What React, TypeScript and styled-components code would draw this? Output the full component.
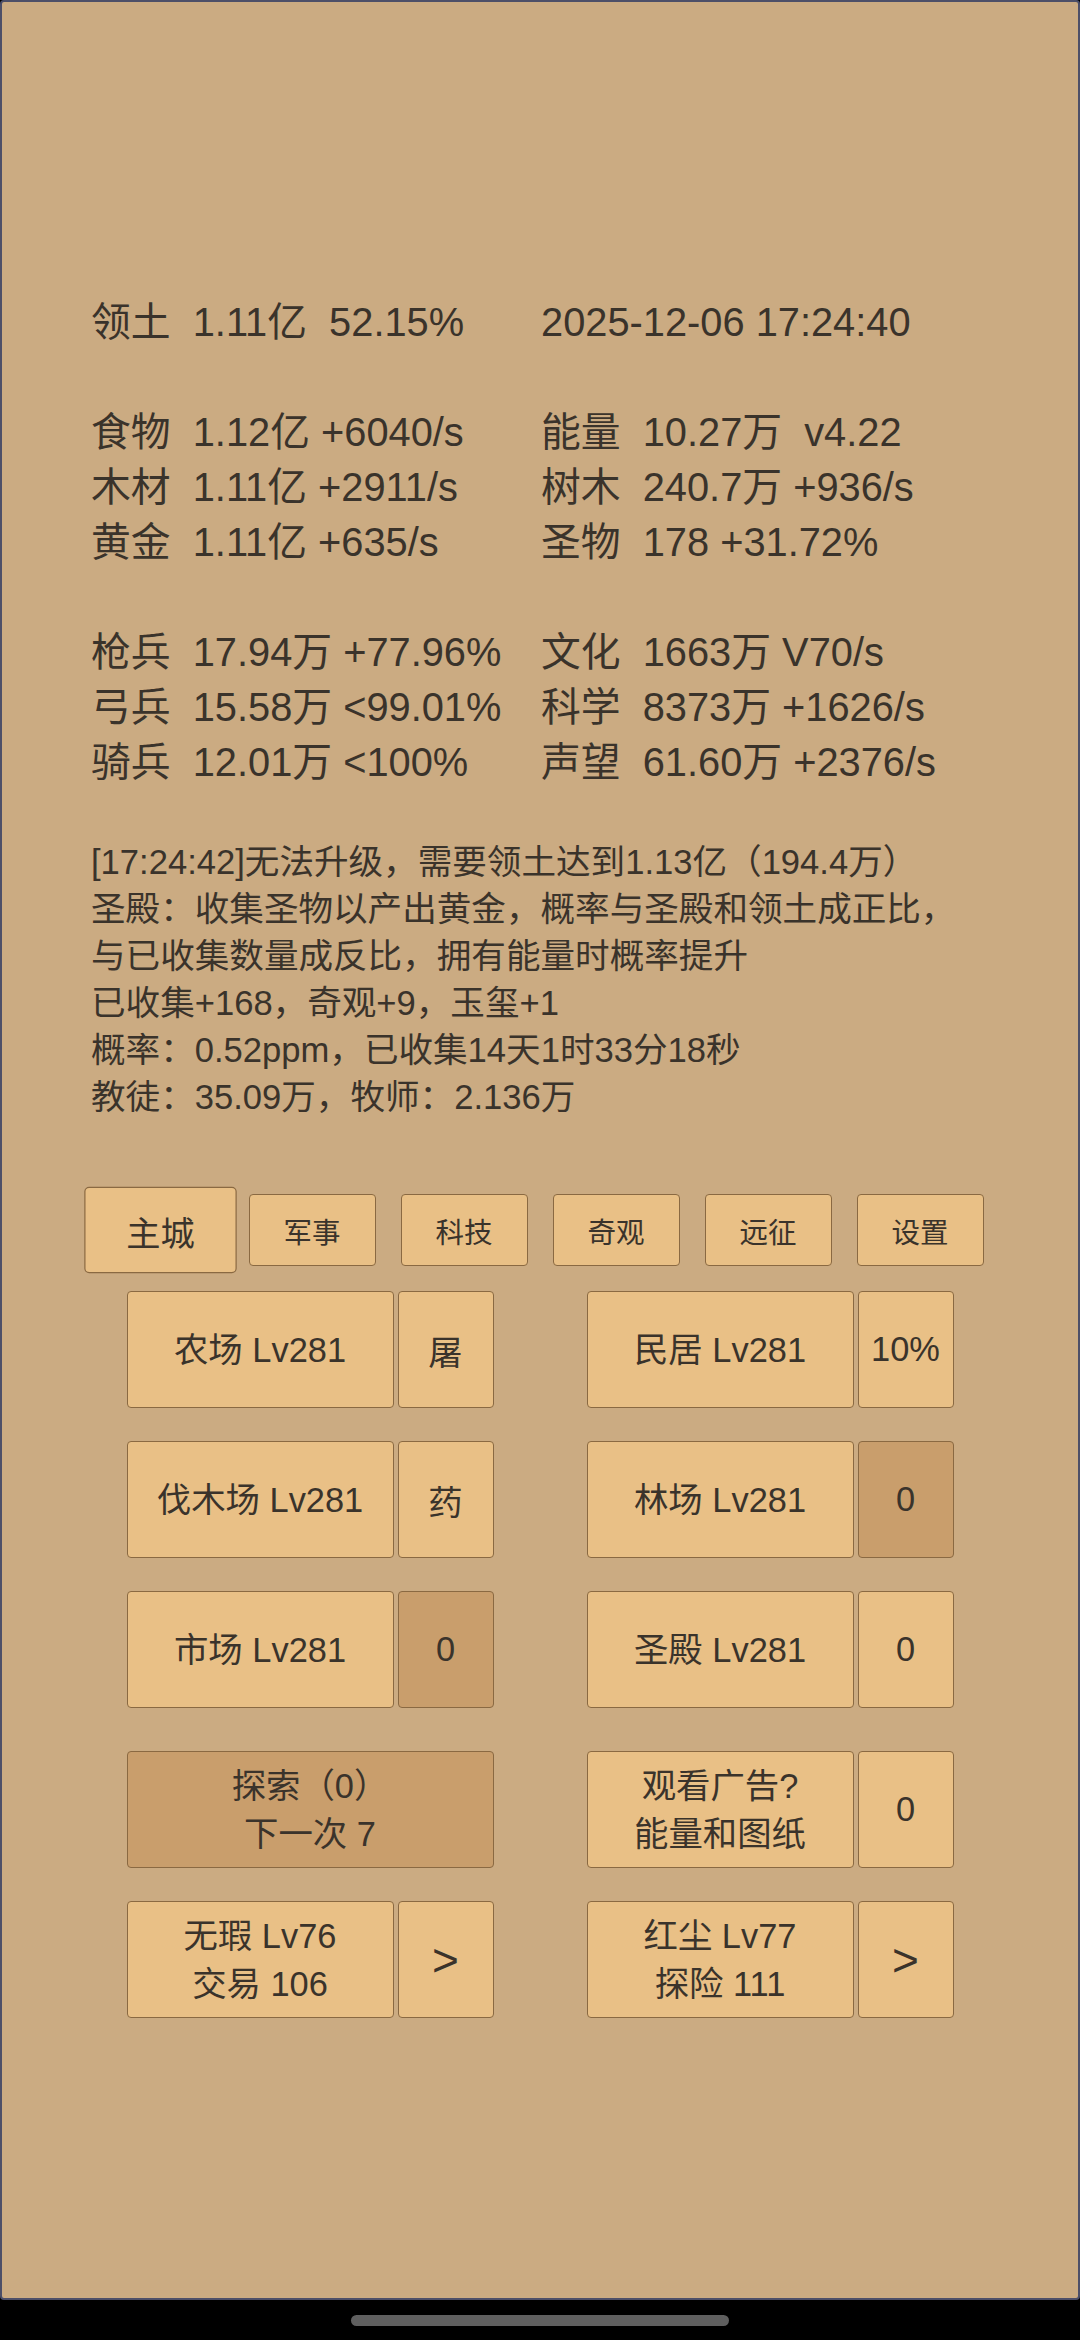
import styled, { createGlobalStyle, css } from "styled-components";

const GlobalStyle = createGlobalStyle`
  html, body {
    margin: 0;
    padding: 0;
    background: #000;
  }
  * {
    box-sizing: border-box;
  }
`;

const FONT = `"Liberation Sans", "Noto Sans CJK SC", sans-serif`;

const leftStats = [
  "领土  1.11亿  52.15%",
  "",
  "食物  1.12亿 +6040/s",
  "木材  1.11亿 +2911/s",
  "黄金  1.11亿 +635/s",
  "",
  "枪兵  17.94万 +77.96%",
  "弓兵  15.58万 <99.01%",
  "骑兵  12.01万 <100%",
];

const rightStats = [
  "2025-12-06 17:24:40",
  "",
  "能量  10.27万  v4.22",
  "树木  240.7万 +936/s",
  "圣物  178 +31.72%",
  "",
  "文化  1663万 V70/s",
  "科学  8373万 +1626/s",
  "声望  61.60万 +2376/s",
];

const logLines = [
  "[17:24:42]无法升级，需要领土达到1.13亿（194.4万）",
  "圣殿：收集圣物以产出黄金，概率与圣殿和领土成正比，",
  "与已收集数量成反比，拥有能量时概率提升",
  "已收集+168，奇观+9，玉玺+1",
  "概率：0.52ppm，已收集14天1时33分18秒",
  "教徒：35.09万，牧师：2.136万",
];

const tabs = ["主城", "军事", "科技", "奇观", "远征", "设置"];

type Tone = "light" | "dark";
interface Pair {
  main: string;
  side: string;
  sideTone?: Tone;
}

const buildings: Pair[] = [
  { main: "农场 Lv281", side: "屠" },
  { main: "民居 Lv281", side: "10%" },
  { main: "伐木场 Lv281", side: "药" },
  { main: "林场 Lv281", side: "0", sideTone: "dark" },
  { main: "市场 Lv281", side: "0", sideTone: "dark" },
  { main: "圣殿 Lv281", side: "0" },
];

const App = () => {
  return (
    <>
      <GlobalStyle />
      <Screen>
        <Frame>
          <StatsGrid>
            <StatColumn>
              {leftStats.map((line, i) => (
                <StatLine key={i}>{line}</StatLine>
              ))}
            </StatColumn>
            <StatColumn>
              {rightStats.map((line, i) => (
                <StatLine key={i}>{line}</StatLine>
              ))}
            </StatColumn>
          </StatsGrid>

          <Log>
            {logLines.map((line, i) => (
              <LogLine key={i}>{line}</LogLine>
            ))}
          </Log>

          <TabBar>
            {tabs.map((t, i) => (
              <Tab key={t} $active={i === 0}>
                {t}
              </Tab>
            ))}
          </TabBar>

          <BuildingGrid>
            {buildings.map((b) => (
              <PairRow key={b.main}>
                <Btn $tone="light">{b.main}</Btn>
                <SideBtn $tone={b.sideTone || "light"}>{b.side}</SideBtn>
              </PairRow>
            ))}
          </BuildingGrid>

          <BuildingGrid $extraTop>
            <PairRow>
              <Btn $tone="dark" $wide>
                <span>探索（0）</span>
                <span>下一次 7</span>
              </Btn>
            </PairRow>
            <PairRow>
              <Btn $tone="light">
                <span>观看广告?</span>
                <span>能量和图纸</span>
              </Btn>
              <SideBtn $tone="light">0</SideBtn>
            </PairRow>
            <PairRow>
              <Btn $tone="light">
                <span>无瑕 Lv76</span>
                <span>交易 106</span>
              </Btn>
              <SideBtn $tone="light" $big>
                &gt;
              </SideBtn>
            </PairRow>
            <PairRow>
              <Btn $tone="light">
                <span>红尘 Lv77</span>
                <span>探险 111</span>
              </Btn>
              <SideBtn $tone="light" $big>
                &gt;
              </SideBtn>
            </PairRow>
          </BuildingGrid>
        </Frame>
        <NavBar>
          <HomeIndicator />
        </NavBar>
      </Screen>
    </>
  );
};

const Screen = styled.div`
  width: 1080px;
  height: 2340px;
  display: flex;
  flex-direction: column;
  background: #000;
  font-family: ${FONT};
  color: #3a332b;
`;

const Frame = styled.main`
  height: 2300px;
  background: #cbab82;
  border: 2px solid #4d4f68;
  border-radius: 4px;
  padding: 293px 0 0 0;
  display: flex;
  flex-direction: column;
`;

// 资源统计
const StatsGrid = styled.section`
  display: grid;
  grid-template-columns: 450px auto;
  padding-left: 89px;
`;

const StatColumn = styled.div`
  display: flex;
  flex-direction: column;
`;

const StatLine = styled.div`
  height: 55px;
  line-height: 55px;
  font-size: 39.8px;
  white-space: pre;
`;

// 日志
const Log = styled.section`
  margin-top: 49px;
  padding-left: 89px;
  display: flex;
  flex-direction: column;
`;

const LogLine = styled.div`
  height: 47px;
  line-height: 47px;
  font-size: 34.6px;
  white-space: pre;
`;

// 页签
const TabBar = styled.nav`
  margin-top: 73px;
  display: flex;
  justify-content: center;
  gap: 25px;
`;

const buttonBase = css<{ $tone: Tone }>`
  border: 1.5px solid #8a6942;
  border-radius: 4px;
  background: ${(p) => (p.$tone === "dark" ? "#c99e6c" : "#e9c086")};
  color: #3a332b;
  font-family: ${FONT};
  display: flex;
  flex-direction: column;
  align-items: center;
  justify-content: center;
`;

const Tab = styled.div<{ $active?: boolean }>`
  width: 127px;
  height: 72px;
  border: 1.5px solid #8a6942;
  border-radius: 4px;
  background: #e9c086;
  font-size: 28.5px;
  display: flex;
  align-items: center;
  justify-content: center;
  transform: ${(p) => (p.$active ? "scale(1.2)" : "none")};
`;

// 建筑
const BuildingGrid = styled.section<{ $extraTop?: boolean }>`
  margin-top: ${(p) => (p.$extraTop ? "43px" : "25px")};
  display: grid;
  grid-template-columns: 367px 367px;
  column-gap: 93px;
  row-gap: 33px;
  justify-content: center;
`;

const PairRow = styled.div`
  display: flex;
  gap: 4px;
  height: 117px;
`;

const Btn = styled.div<{ $tone: Tone; $wide?: boolean }>`
  ${buttonBase};
  width: ${(p) => (p.$wide ? "367px" : "267px")};
  font-size: 34.4px;
  line-height: 48px;
  white-space: pre;
`;

const SideBtn = styled.div<{ $tone: Tone; $big?: boolean }>`
  ${buttonBase};
  width: 96px;
  font-size: ${(p) => (p.$big ? "46px" : "34.4px")};
`;

const NavBar = styled.div`
  flex: 1;
  display: flex;
  justify-content: center;
  padding-top: 15px;
`;

const HomeIndicator = styled.div`
  width: 378px;
  height: 11px;
  border-radius: 6px;
  background: #5f5f5f;
`;

export default App;
